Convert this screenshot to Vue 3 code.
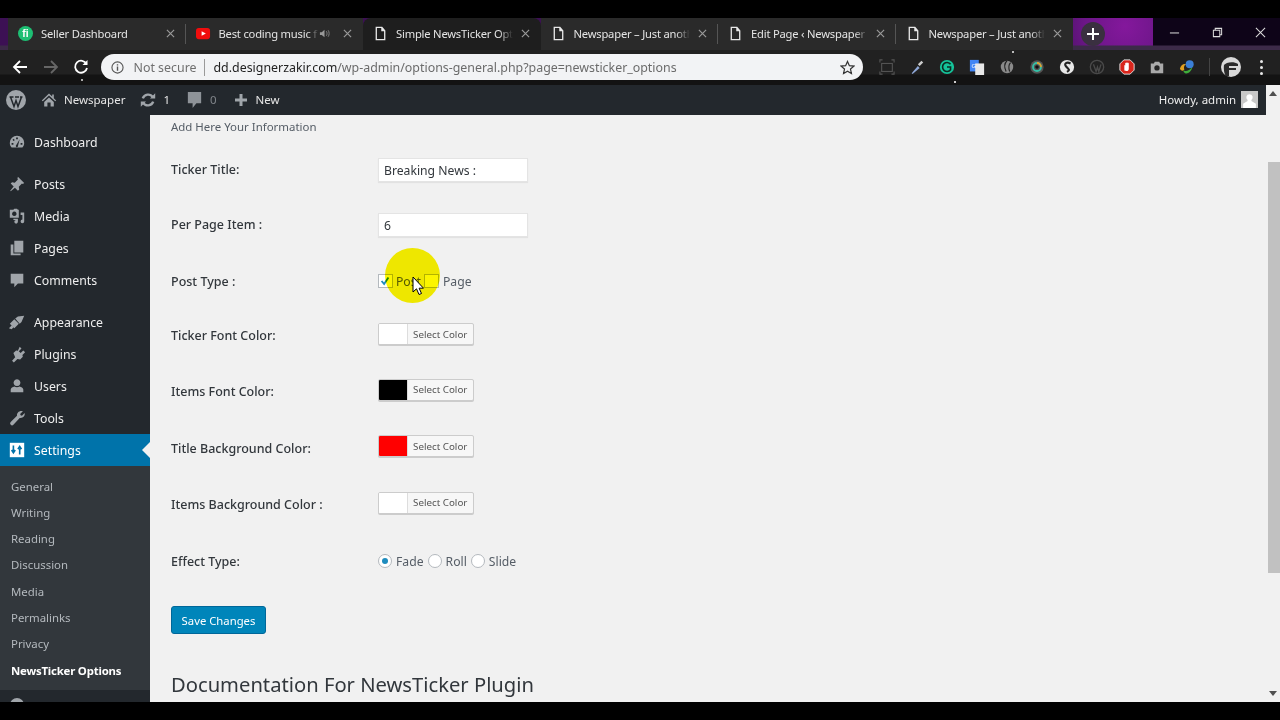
<script setup>
const tabs = [
  { id: 'fiverr', title: 'Seller Dashboard' },
  { id: 'yt', title: 'Best coding music f', sound: true },
  { id: 'doc', title: 'Simple NewsTicker Opt', active: true },
  { id: 'doc', title: 'Newspaper – Just anoth' },
  { id: 'doc', title: 'Edit Page ‹ Newspaper' },
  { id: 'doc', title: 'Newspaper – Just anoth' }
]
const menuA = [{ k: 'dash', t: 'Dashboard' }]
const menuB = [
  { k: 'pin', t: 'Posts' }, { k: 'media', t: 'Media' }, { k: 'pages', t: 'Pages' }, { k: 'comment', t: 'Comments' }
]
const menuC = [
  { k: 'brush', t: 'Appearance' }, { k: 'plug', t: 'Plugins' }, { k: 'user', t: 'Users' }, { k: 'wrench', t: 'Tools' }
]
const groups = [menuA, menuB, menuC]
const sub = ['General', 'Writing', 'Reading', 'Discussion', 'Media', 'Permalinks', 'Privacy']
const colors = [
  { label: 'Ticker Font Color:', c: '#ffffff' },
  { label: 'Items Font Color:', c: '#000000' },
  { label: 'Title Background Color:', c: '#ff0000' },
  { label: 'Items Background Color :', c: '#ffffff' }
]
const paths = {
  dash: 'M10 3a8 8 0 0 0-8 8c0 2 .7 3.800 2 5h12c1.300-1.200 2-3 2-5a8 8 0 0 0-8-8zm-1 2h2v2H9zM5 7.500l1.500-1 1 1.500-1.500 1zM4 11h2v2H4zm10 0h2v2h-2zm-4.800 2.300L13 7l-1.800 7a1.300 1.300 0 1 1-2-.7z',
  pin: 'M11 2l7 7-1.500 1-1-.5-3.500 3.500.5 3-1.500 1.500-3.300-3.300L3 18l-.5-.5 3.800-4.700L3 9.500 4.500 8l3 .5L11 5l-.5-1z',
  media: 'M2 3h4l1-1h3l1 1h1v9H2zm5 2a2.500 2.500 0 1 0 .01 0zM13 6h5v10a2 2 0 1 1-2-2V9h-2V6zM6 13h5v3.500a2 2 0 1 1-2-2V14.500H6z',
  pages: 'M7 2h10v13H7zM3 6h3v10h8v2H3z',
  comment: 'M3 3h14v11h-6l-4 4v-4H3z',
  brush: 'M2 12l5-5 5 5-5 5zM8 6l3-2 7-1-3 7-2 2zM1 17l3-3 2 2-2 2z',
  plug: 'M13 2l2 2-3 3 2 2 3-3 2 2-3 3 .5 2-3 3-3-.500-4 4-2-2 3.500-4L6 9l3-3 2 .5z',
  user: 'M10 2.500a3.800 3.800 0 1 1-.01 0zM3 17v-3c0-2 2.500-3 4-3.500 1.800 1 4.200 1 6 0 1.500.5 4 1.500 4 3.500v3z',
  wrench: 'M16.500 2.500l-3 3 .5 1.500 1.500.5 3-3c.6 3-1.500 5.500-4.500 5.500l-1 .1L6 17.500a1.800 1.800 0 0 1-3-3l7-7c-.5-3 2.500-6 6.500-5z'
}
const exts = ['cap', 'drop', 'g', 'tr', 'leaf', 'ring', 's', 'wp', 'stop', 'cam', 'globe']
</script>

<template>
  <div class="screen">
    <div class="blackbar"></div>

    <div class="tabstrip">
      <div class="tabs">
        <div v-for="(t, i) in tabs" :key="i" class="tab" :class="{ active: t.active, sep: i === 0 || i === 3 || i === 4 }">
          <svg v-if="t.id === 'fiverr'" class="fav" viewBox="0 0 16 16">
            <circle cx="8" cy="8" r="8" fill="#1dbf73" />
            <text x="8" y="12" font-size="11" font-weight="700" fill="#fff" text-anchor="middle" font-family="Liberation Sans">fi</text>
          </svg>
          <svg v-else-if="t.id === 'yt'" class="fav" viewBox="0 0 16 16">
            <rect y="2" width="15" height="12" rx="3" fill="#f00d0d" />
            <path d="M6 5.500l4.500 2.500L6 10.500z" fill="#fff" />
          </svg>
          <svg v-else class="fav" viewBox="0 0 16 16" fill="none" stroke="#e8e8e8" stroke-width="1.400">
            <path d="M3.500 1.500h6l3 3.500v9.500h-9zM9.500 1.500V5h3" />
          </svg>
          <span class="tabtitle">{{ t.title }}</span>
          <svg v-if="t.sound" class="spk" viewBox="0 0 12 12"><path d="M1 4.500h2L6 2v8L3 7.500H1z" fill="#999" /><path d="M8 3.500c1 1.500 1 3.500 0 5M10 2.500c1.400 2 1.400 5 0 7" fill="none" stroke="#888" /></svg>
          <svg class="tabx" viewBox="0 0 10 10" fill="none" stroke="#9a9a9a" stroke-width="1.300"><path d="M1 1l8 8M9 1l-8 8" /></svg>
        </div>
      </div>
      <div class="newtab">
        <span class="plusdisc">
          <svg viewBox="0 0 12 12" fill="none" stroke="#fff" stroke-width="2"><path d="M6 0v12M0 6h12" /></svg>
        </span>
      </div>
      <div class="winbtns">
        <svg viewBox="0 0 12 12" fill="none" stroke="#ddd" stroke-width="1.100"><path d="M1 6.500h10" /></svg>
        <svg viewBox="0 0 12 12" fill="none" stroke="#ddd" stroke-width="1.100"><path d="M1.500 3.500h7v7h-7zM3.500 3.500v-2h7v7h-2" /></svg>
        <svg viewBox="0 0 12 12" fill="none" stroke="#ddd" stroke-width="1.100"><path d="M1 1l10 10M11 1L1 11" /></svg>
      </div>
    </div>

    <div class="toolbar">
      <svg class="nav" viewBox="0 0 16 16" fill="none" stroke="#fff" stroke-width="1.800"><path d="M15 8H2M8 2L2 8l6 6" /></svg>
      <svg class="nav" viewBox="0 0 16 16" fill="none" stroke="#666" stroke-width="1.800"><path d="M1 8h13M8 2l6 6-6 6" /></svg>
      <svg class="nav" viewBox="0 0 16 16" fill="none" stroke="#fff" stroke-width="1.800"><path d="M13.500 5A6 6 0 1 0 14 9" /><path d="M14.500 1v5h-5z" fill="#fff" stroke="none" /></svg>
      <div class="omnibox">
        <svg class="info" viewBox="0 0 14 14" fill="none" stroke="#555" stroke-width="1.200"><circle cx="7" cy="7" r="6" /><path d="M7 6v4.500M7 3.500v1.300" stroke-width="1.500" /></svg>
        <span class="notsec">Not secure</span>
        <i class="omnisep"></i>
        <span class="url"><b>dd.designerzakir.com</b>/wp-admin/options-general.php?page=newsticker_options</span>
        <svg class="star" viewBox="0 0 16 16" fill="none" stroke="#333" stroke-width="1.300"><path d="M8 1.500l2 4.500 4.800.5-3.600 3.200 1 4.800L8 12l-4.200 2.500 1-4.800L1.200 6.500 6 6z" /></svg>
      </div>
      <div class="exts">
        <div v-for="e in exts" :key="e" class="ext">
          <svg viewBox="0 0 18 18">
            <g v-if="e === 'cap'" fill="none" stroke="#555" stroke-width="1.200"><rect x="3" y="5" width="12" height="9" /><path d="M1 4V1h3M14 1h3v3M1 14v3h3M14 17h3v-3" /></g>
            <g v-else-if="e === 'drop'"><path d="M3 16l7-8 2 2-8 7z" fill="#8fa8d8" /><path d="M10 6l4-4 2 2-4 4z" fill="#ccc" /></g>
            <g v-else-if="e === 'g'"><circle cx="9" cy="9" r="8" fill="#15c39a" /><path d="M13 6a5 5 0 1 0 0 6V9H9" fill="none" stroke="#0c2b22" stroke-width="1.800" /></g>
            <g v-else-if="e === 'tr'"><rect x="1" y="1" width="10" height="13" fill="#4285f4" /><rect x="7" y="5" width="10" height="13" fill="#e8e8e8" /><text x="5.500" y="10" font-size="7" fill="#fff" text-anchor="middle" font-family="Liberation Sans">G</text></g>
            <g v-else-if="e === 'leaf'"><circle cx="9" cy="9" r="7" fill="#8a8a8a" /><path d="M9 2c-4 4-3 8-1 12M13 4c-3 3-2 7-1 10" fill="none" stroke="#222" stroke-width="1.300" /></g>
            <g v-else-if="e === 'ring'"><circle cx="9" cy="9" r="7.500" fill="#555" /><circle cx="9" cy="9" r="4.500" fill="none" stroke="#35c0a8" stroke-width="2" /><path d="M9 4.500a4.500 4.500 0 0 1 4.500 4.500" fill="none" stroke="#e0a030" stroke-width="2" /><circle cx="9" cy="9" r="2" fill="#111" /></g>
            <g v-else-if="e === 's'"><circle cx="9" cy="9" r="8" fill="#e8e8e8" /><path d="M13 5C9 3 5 5 8 8.500s5 3.500 1 6" fill="none" stroke="#222" stroke-width="2.400" /></g>
            <g v-else-if="e === 'wp'"><circle cx="9" cy="9" r="7.500" fill="none" stroke="#4a4a4a" stroke-width="1.500" /><path d="M5 6l3 8 1.500-5 1.500 5 2.500-8" fill="none" stroke="#4a4a4a" stroke-width="1.500" /></g>
            <g v-else-if="e === 'stop'"><path d="M5.500 1h7L17 5.500v7L12.500 17h-7L1 12.500v-7z" fill="#d9261c" stroke="#eee" /><path d="M6 13V7.500c0-1 1-1 1 0V5c0-1 1.300-1 1.300 0v-.5c0-1 1.400-1 1.400 0V5c0-1 1.300-1 1.300 0v6c0 2-1 2.500-2.500 2.500z" fill="#fff" /></g>
            <g v-else-if="e === 'cam'"><path d="M2 5h3.500l1-2h5l1 2H16v11H2z" fill="#aaa" /><circle cx="9" cy="10" r="3" fill="#222" /></g>
            <g v-else><path d="M1 11c1-4 4-6 7-5-2 1-3 3-2 6-2 2-4 1-5-1z" fill="#e0a020" /><path d="M5 13c3 1 7 0 10-4-1 5-5 8-8 7-1-.500-2-1.500-2-3z" fill="#3fae3a" /><circle cx="12" cy="6" r="4.500" fill="#3b7fd6" /></g>
          </svg>
        </div>
        <i class="extsep"></i>
        <div class="avatar">
          <svg viewBox="0 0 20 20"><circle cx="10" cy="10" r="10" fill="#d8d8d8" /><path d="M3 8c2-3 10-4 14-1v2H8v2h7v2H8v6H5C3 17 2.500 11 3 8z" fill="#2a2a2a" /></svg>
        </div>
        <div class="dots"><i></i><i></i><i></i></div>
      </div>
    </div>

    <div class="window">
      <div class="wpwrap">
        <header class="adminbar">
          <div class="ablist">
            <svg class="wplogo" viewBox="0 0 20 20"><circle cx="10" cy="10" r="10" fill="#a0a5aa" /><path d="M4.500 7l3.500 9.500 2-6 2 6L15.500 7M3.500 7h4M9 7h4M14 7h2.500" fill="none" stroke="#23282d" stroke-width="1.500" /></svg>
            <svg class="abic home" viewBox="0 0 20 20"><path d="M10 2L1 10.500l1.300 1.200L10 4.500l7.700 7.200 1.300-1.200-3-2.800V3h-2v2.500zM4 12.500L10 7l6 5.500V18h-4v-5H8v5H4z" fill="#a0a5aa" /></svg>
            <span class="abt">Newspaper</span>
            <svg class="abic upd" viewBox="0 0 20 20" fill="none" stroke="#a0a5aa" stroke-width="3"><path d="M3.500 8A7 7 0 0 1 16 6.500M16.500 12A7 7 0 0 1 4 13.500" /><path d="M12.500 8H19V1.500zM7.500 12H1v6.500z" fill="#a0a5aa" stroke="none" /></svg>
            <span class="abt n1">1</span>
            <svg class="abic cmt" viewBox="0 0 20 20"><path d="M3 2h14v12h-5l-4 5v-5H3z" fill="#8e9398" /></svg>
            <span class="abt n0">0</span>
            <svg class="abic plus" viewBox="0 0 14 14"><path d="M5.500 1h3v4.500H13v3H8.500V13h-3V8.500H1v-3h4.500z" fill="#a0a5aa" /></svg>
            <span class="abt">New</span>
          </div>
          <div class="howdy">
            <span>Howdy, admin</span>
            <svg class="gravatar" viewBox="0 0 16 16"><rect width="16" height="16" fill="#c8c8c8" /><path d="M8 3a3 3 0 0 1 1.800 5.400v1L14 12v4H2v-4l4.200-2.600v-1A3 3 0 0 1 8 3z" fill="#fff" /></svg>
          </div>
        </header>

        <div class="wpbody">
          <nav class="sidebar">
            <div v-for="(g, gi) in groups" :key="gi" class="mgroup">
              <div v-for="m in g" :key="m.t" class="mitem">
                <svg class="micon" viewBox="0 0 20 20"><path :d="paths[m.k]" fill="#a0a5aa" fill-rule="evenodd" /></svg>
                <span>{{ m.t }}</span>
              </div>
            </div>
            <div class="mitem current">
              <svg class="micon" viewBox="0 0 20 20"><path d="M2 2h16v16H2z" fill="#fff" /><path d="M6 5v7M4 10l2 3 2-3M13 15V8M11 9l2-3 2 3" fill="none" stroke="#0073aa" stroke-width="1.800" /></svg>
              <span>Settings</span>
            </div>
            <div class="submenu">
              <a v-for="s in sub" :key="s">{{ s }}</a>
              <a class="on">NewsTicker Options</a>
            </div>
            <div class="collapse"><i></i></div>
          </nav>

          <main class="content">
            <p class="hint">Add Here Your Information</p>
            <div class="form">
              <div class="row r1">
                <label>Ticker Title:</label>
                <input class="field" type="text" value="Breaking News :" />
              </div>
              <div class="row r2">
                <label>Per Page Item :</label>
                <input class="field" type="text" value="6" />
              </div>
              <div class="row r3">
                <label>Post Type :</label>
                <div class="opts">
                  <span class="check on"><svg viewBox="0 0 14 14" fill="none" stroke="#1e8cbe" stroke-width="2.200"><path d="M3 7l3 3.500L11 3" /></svg></span>
                  <span class="otext">Post</span>
                  <span class="check second"></span>
                  <span class="otext">Page</span>
                </div>
              </div>
              <div v-for="(c, i) in colors" :key="c.label" class="row colorrow" :class="'c' + i">
                <label>{{ c.label }}</label>
                <div class="colorbtn">
                  <span class="swatch" :style="{ background: c.c }"></span>
                  <span class="cbtext">Select Color</span>
                </div>
              </div>
              <div class="row r8">
                <label>Effect Type:</label>
                <div class="opts radios">
                  <span class="radio on"></span><span class="otext">Fade</span>
                  <span class="radio"></span><span class="otext">Roll</span>
                  <span class="radio"></span><span class="otext">Slide</span>
                </div>
              </div>
            </div>
            <button class="save">Save Changes</button>
            <h2>Documentation For NewsTicker Plugin</h2>
          </main>
        </div>
      </div>

      <aside class="scrollbar">
        <svg class="arrow" viewBox="0 0 8 5"><path d="M4 0l4 5H0z" fill="#505050" /></svg>
        <div class="thumb"></div>
        <svg class="arrow" viewBox="0 0 8 5"><path d="M4 5L0 0h8z" fill="#505050" /></svg>
      </aside>
    </div>

    <div class="blackfoot"></div>

    <div class="spot"></div>
    <svg class="cursor" viewBox="0 0 12 20"><path d="M1 1v15l3.500-3.200L7 18.500l2.500-1-2.400-5.300H11.500z" fill="#fff" stroke="#000" stroke-width="1" /></svg>
  </div>
</template>

<style>
html, body { margin: 0; background: #000; overflow: hidden; }
</style>

<style scoped>
.screen { position: relative; width: 1280px; height: 720px; overflow: hidden; background: #000; font-family: "Noto Sans", "Open Sans", sans-serif; color: #32373c; }
.blackbar { height: 18px; background: #000; }
.blackfoot { height: 18px; background: #000; }

.tabstrip { height: 32px; display: flex; align-items: stretch; box-sizing: border-box; padding-left: 8px;
  background:
    linear-gradient(180deg, transparent 0, transparent 27px, #3c2a48 28px, #3c2a48 100%),
    linear-gradient(90deg, transparent 1153px, #0e0418 1153px),
    radial-gradient(circle at 1125px 8px, #84189c 0, #6c1688 40px, #3c1054 85px),
    #2a0a3a;
}
.tabs { display: flex; }
.tab { width: 177.500px; box-sizing: border-box; display: flex; align-items: center; padding: 0 11px 1px 10px; position: relative; color: #e4e4e4; font-size: 11.200px; background: #2a2a2a; }
.tab.active { background: #1e1e1e; border-radius: 8px 8px 0 0; }
.tab.sep::after { content: ""; position: absolute; right: 0; top: 6px; bottom: 6px; width: 1px; background: #555; }
.fav { width: 15px; height: 15px; flex: none; margin-right: 8px; }
.tabtitle { flex: 1; min-width: 0; white-space: nowrap; letter-spacing: -0.200px;
  -webkit-mask-image: linear-gradient(90deg, #000 88%, transparent 100%); mask-image: linear-gradient(90deg, #000 88%, transparent 100%); }
.spk { width: 11px; height: 11px; flex: none; margin: 0 5px 0 0; }
.tabx { width: 9px; height: 9px; flex: none; margin-left: 8px; }
.newtab { width: 40px; display: flex; align-items: center; justify-content: center; }
.plusdisc { width: 24px; height: 24px; border-radius: 50%; background: #3a3040; display: flex; align-items: center; justify-content: center; }
.plusdisc svg { width: 12px; height: 12px; }
.winbtns { margin-left: auto; display: flex; align-items: center; gap: 32px; padding: 0 14px 4px 0; }
.winbtns svg { width: 11px; height: 11px; }

.toolbar { height: 35px; display: flex; align-items: center; box-sizing: border-box; padding: 0 12px 1px 12px;
  background:
    radial-gradient(circle at 82px 30px, #aaa 0, #aaa 1px, transparent 1.500px),
    radial-gradient(circle at 1013px 2px, #bbb 0, #bbb 1px, transparent 1.500px),
    radial-gradient(circle at 955px 32px, #ccc 0, #ccc 1px, transparent 1.500px),
    radial-gradient(circle at 1130px 14px, #666 0, #666 1px, transparent 1.500px),
    linear-gradient(180deg, #212121 0, #212121 24px, #131313 25px, #131313 100%);
}
.nav { width: 16px; height: 16px; flex: none; margin-right: 14.500px; }
.omnibox { margin-left: -3px; width: 762px; height: 26px; flex: none; box-sizing: border-box; background: #f2f3f5; border-radius: 13px; display: flex; align-items: center; padding: 0 9px 0 10px; font-size: 12.400px; color: #6b6b6b; white-space: nowrap; }
.info { width: 13px; height: 13px; flex: none; margin-right: 10px; }
.notsec { color: #6f6f6f; }
.omnisep { width: 1px; height: 17px; background: #9a9a9a; margin: 0 9px 0 7px; }
.url b { font-weight: 400; color: #222; }
.star { width: 15px; height: 15px; margin-left: auto; position: relative; left: 1px; }
.exts { display: flex; align-items: center; margin-left: 9px; flex: none; }
.ext { width: 30.100px; display: flex; justify-content: center; }
.ext svg { width: 16px; height: 16px; }
.extsep { width: 1px; height: 18px; background: #444; margin: 0 11px 0 6px; }
.avatar { width: 20px; height: 20px; }
.avatar svg { width: 20px; height: 20px; display: block; }
.dots { margin-left: 19px; display: flex; flex-direction: column; gap: 3px; }
.dots i { width: 3px; height: 3px; border-radius: 50%; background: #e8e8e8; display: block; }

.window { height: 617px; display: flex; }
.wpwrap { flex: 1; min-width: 0; display: flex; flex-direction: column; }
.adminbar { height: 30px; flex: none; background: #23282d; display: flex; align-items: center; justify-content: space-between; padding: 0 8px 1px 6px; box-sizing: border-box; font-size: 11.500px; color: #eee; }
.ablist { display: flex; align-items: center; }
.wplogo { width: 20px; height: 20px; margin-right: 15px; }
.abic { flex: none; }
.home { width: 16px; height: 16px; margin-right: 7px; }
.upd { width: 16px; height: 16px; margin: 0 7px 0 15px; }
.cmt { width: 19px; height: 19px; margin: 0 6px 0 15px; }
.plus { width: 14px; height: 14px; margin: 0 8px 0 17px; }
.abt { color: #e6e6e6; }
.n1 { color: #e6e6e6; }
.n0 { color: #80858a; }
.howdy { display: flex; align-items: center; gap: 5px; }
.gravatar { width: 17px; height: 17px; }

.wpbody { flex: 1; min-height: 0; display: flex; }
.sidebar { width: 150px; flex: none; background: #23282d; padding-top: 11px; box-sizing: border-box; overflow: hidden; }
.mgroup { margin-bottom: 10px; }
.mgroup:nth-child(3) { margin-bottom: 0; }
.mitem { height: 32px; display: flex; align-items: center; padding-left: 8px; font-size: 12.300px; color: #eeeeee; position: relative; }
.micon { width: 18px; height: 18px; margin-right: 8px; flex: none; }
.mitem.current { background: #0073aa; color: #fff; }
.mitem.current::after { content: ""; position: absolute; right: 0; top: 50%; margin-top: -8px; border: 8px solid transparent; border-right-color: #f1f1f1; border-left-width: 0; border-right-width: 8px; }
.submenu { background: #32373c; padding: 7.500px 0 6.500px 11px; display: flex; flex-direction: column; }
.submenu a { height: 26.300px; line-height: 26.300px; font-size: 11.400px; color: #b4b9be; white-space: nowrap; }
.submenu a.on { color: #fff; font-weight: 700; letter-spacing: -0.200px; }
.collapse { height: 20px; padding: 8px 0 0 10px; }
.collapse i { display: block; width: 14px; height: 14px; border-radius: 50%; background: #a0a5aa; }

.content { flex: 1; min-width: 0; background: #f1f1f1; padding-left: 21px; overflow: hidden; }
.hint { margin: 4px 0 0; height: 23px; line-height: 16px; font-size: 11.450px; color: #555d66; }
.form { display: flex; flex-direction: column; }
.row { display: flex; align-items: center; }
.row label { width: 207px; flex: none; font-size: 12.500px; font-weight: 500; color: #32373c; }
.r1 { height: 56px; }
.r2 { height: 55px; }
.r3 { height: 56px; }
.c0 { height: 53px; }
.c1 { height: 58px; }
.c2 { height: 56px; }
.c3 { height: 56px; }
.r8 { height: 58px; }
.r1 label, .r2 label { margin-top: -2px; }
.field { width: 150px; height: 24px; box-sizing: border-box; border: 1px solid #e4e4e4; background: #fff; padding: 1px 5px 0; font: 12.200px "Noto Sans", sans-serif; color: #32373c; outline: none; box-shadow: 0 1px 1px rgba(0,0,0,.06); margin-top: -1px; }
.opts { display: flex; align-items: center; font-size: 12.200px; color: #555d66; }
.check { width: 15px; height: 14px; box-sizing: border-box; border: 1px solid #b4b9be; background: #fff; display: block; margin-right: 3px; }
.check svg { width: 12px; height: 12px; display: block; }
.check.second { margin: 0 4px 0 3px; }
.radio { width: 14px; height: 14px; box-sizing: border-box; border: 1px solid #b4b9be; border-radius: 50%; background: #fff; margin: 0 4px 0 4px; position: relative; }
.radio:first-child { margin-left: 0; }
.radio.on::after { content: ""; position: absolute; left: 3px; top: 3px; width: 6px; height: 6px; border-radius: 50%; background: #1e8cbe; }
.colorbtn { width: 96px; height: 22px; box-sizing: border-box; border: 1px solid #ccc; border-radius: 2px; background: #f7f7f7; box-shadow: 0 1px 0 #ccc; display: flex; align-items: center; overflow: hidden; margin-top: -3px; }
.c2 .colorbtn { margin-top: -4px; }
.swatch { width: 29px; height: 100%; flex: none; margin-left: -1px; border-right: 1px solid #ddd; }
.cbtext { font-size: 9.800px; color: #555; margin-left: 5px; white-space: nowrap; }
.save { display: block; margin-top: 16px; width: 95px; height: 28px; box-sizing: border-box; background: #0085ba; border: 1px solid #006799; border-radius: 3px; color: #fff; font: 11.300px "Noto Sans", sans-serif; padding: 0; }
.content h2 { margin: 36px 0 0; font-size: 20.200px; font-weight: 400; line-height: 28px; color: #32373c; white-space: nowrap; }

.scrollbar { width: 14px; flex: none; background: #f1f1f1; display: flex; flex-direction: column; align-items: center; padding: 6px 0; box-sizing: border-box; }
.arrow { width: 8px; height: 5px; flex: none; }
.thumb { width: 12px; height: 411px; background: #c1c1c1; margin: 66px 0 auto 2px; }

.spot { position: absolute; left: 385px; top: 248px; width: 55px; height: 55px; border-radius: 50%; background: #fcf500; mix-blend-mode: multiply; }
.cursor { position: absolute; left: 412px; top: 276px; width: 12px; height: 20px; }
</style>
